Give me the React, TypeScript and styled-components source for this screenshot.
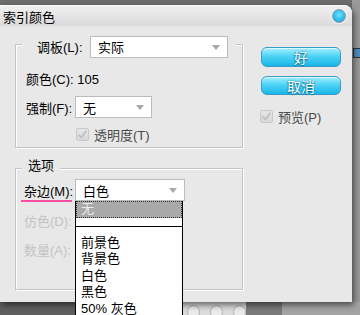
import React from 'react';
import styled, { createGlobalStyle } from 'styled-components';

const GlobalStyle = createGlobalStyle`
  html, body { margin: 0; padding: 0; }
  body {
    background: #6d6d6d;
    font-family: "Liberation Sans", "Noto Sans CJK SC", sans-serif;
    font-size: 13px;
    color: #000;
  }
`;

const Screen = styled.div`
  position: relative;
  width: 360px;
  height: 315px;
  overflow: hidden;
  background: linear-gradient(to right, #6d6d6d 352px, #9a9a9a 352px);
  display: flex;
  flex-direction: column;
`;

const Dialog = styled.div`
  position: relative;
  z-index: 1;
  margin-top: 5px;
  width: 352px;
  height: 297px;
  flex-shrink: 0;
  background: #e8e8e8;
  border-radius: 0 8px 0 0;
  box-shadow: 2px 3px 6px rgba(0, 0, 0, 0.55);
  display: flex;
  flex-direction: column;
`;

const TitleBar = styled.div`
  height: 21px;
  flex-shrink: 0;
  display: flex;
  align-items: center;
  justify-content: space-between;
  padding: 0 6px 0 3px;
  border-radius: 0 8px 0 0;
  background: linear-gradient(#f0f0f0, #dadada);
  border-top: 1px solid #fafafa;
  box-sizing: border-box;
  font-size: 13px;
`;

const CloseDot = styled.div`
  width: 12px;
  height: 12px;
  border-radius: 50%;
  background: radial-gradient(circle at 50% 40%, #6fe3ff, #1fb3e8 70%);
  border: 1px solid #8b9aa3;
  box-shadow: 0 0 0 1px #f4f4f4;
`;

const Body = styled.div`
  flex: 1;
  display: flex;
`;

const LeftCol = styled.div`
  margin-left: 15px;
  padding-top: 18px;
  width: 228px;
  display: flex;
  flex-direction: column;
  gap: 20px;
`;

const GroupBox = styled.div<{ $h: number; $pad: number }>`
  box-sizing: border-box;
  height: ${p => p.$h}px;
  border: 1px solid #c4c4c4;
  box-shadow: inset 1px 1px 0 #fff, 1px 1px 0 #fff;
  padding-left: ${p => p.$pad}px;
  display: flex;
  flex-direction: column;
  align-items: flex-start;
`;

const Header = styled.div`
  align-self: stretch;
  margin: -10px 6px 0 -4px;
  height: 23px;
  padding: 0 8px 0 15px;
  background: #e8e8e8;
  display: flex;
  align-items: center;
  justify-content: space-between;
`;

const Legend = styled.div`
  margin: -11px 0 0 -2px;
  padding: 0 6px;
  height: 16px;
  line-height: 16px;
  background: #e8e8e8;
`;

const Row = styled.div<{ $mt: number }>`
  margin-top: ${p => p.$mt}px;
  display: flex;
  align-items: center;
  height: 22px;
`;

const TextLine = styled.div<{ $mt: number; $muted?: boolean }>`
  margin-top: ${p => p.$mt}px;
  line-height: 16px;
  height: 16px;
  color: ${p => (p.$muted ? '#c3c3c3' : '#000')};
`;

const Label = styled.span<{ $w: number; $mark?: boolean }>`
  position: relative;
  width: ${p => p.$w}px;
  flex-shrink: 0;
  &::after {
    content: '';
    display: ${p => (p.$mark ? 'block' : 'none')};
    position: absolute;
    left: -3px;
    top: 19px;
    width: 51px;
    height: 2px;
    background: #ff4fa3;
  }
`;

const SelectBox = styled.div<{ $w: number }>`
  position: relative;
  box-sizing: border-box;
  width: ${p => p.$w}px;
  height: 22px;
  background: #fff;
  border: 1px solid #bcbcbc;
  display: flex;
  align-items: center;
  padding-left: 7px;
  &::after {
    content: '';
    position: absolute;
    right: 7px;
    top: 8px;
    border-left: 4px solid transparent;
    border-right: 4px solid transparent;
    border-top: 5px solid #a8a8a8;
  }
`;

const Menu = styled.div`
  position: absolute;
  z-index: 2;
  top: 21px;
  left: -1px;
  width: 108px;
  height: 130px;
  box-sizing: border-box;
  background: #fff;
  border-left: 1px solid #000;
  border-right: 1px solid #000;
`;

const MenuItem = styled.div<{ $active?: boolean }>`
  height: 16.5px;
  line-height: 16.5px;
  padding-left: 5px;
  box-sizing: border-box;
  background: ${p => (p.$active ? '#a9a9a9' : 'transparent')};
  color: ${p => (p.$active ? '#ececec' : '#000')};
  outline: ${p => (p.$active ? '1px dotted #333' : 'none')};
  outline-offset: -1px;
`;

const Separator = styled.div`
  height: 17px;
  display: flex;
  align-items: center;
  margin: 0 -1px;
  &::before {
    content: '';
    flex: 1;
    height: 1px;
    margin-top: 1px;
    background: #000;
  }
`;

const CheckRow = styled.div<{ $mt: number; $ml: number }>`
  margin-top: ${p => p.$mt}px;
  margin-left: ${p => p.$ml}px;
  display: flex;
  align-items: center;
  gap: 5px;
  height: 14px;
  color: #4a4a4a;
`;

const CheckBox = styled.div`
  width: 13px;
  height: 13px;
  box-sizing: border-box;
  border: 1px solid #c9c9c9;
  border-radius: 2px;
  background: linear-gradient(#e6e6e6, #d8d8d8);
  display: flex;
  align-items: center;
  justify-content: center;
`;

const RightCol = styled.div`
  margin-left: 18px;
  padding-top: 21px;
  display: flex;
  flex-direction: column;
  align-items: flex-start;
`;

const Button = styled.div<{ $mt: number; $h: number }>`
  margin-top: ${p => p.$mt}px;
  width: 80px;
  height: ${p => p.$h}px;
  box-sizing: border-box;
  border: 1px solid #3a9cc6;
  border-radius: 6px;
  background: linear-gradient(#a6f0ff 0%, #4fd3f6 45%, #19b6e6 100%);
  box-shadow: inset 0 1px 0 rgba(255, 255, 255, 0.6);
  display: flex;
  align-items: center;
  justify-content: center;
  color: #fff;
  font-size: 14px;
  text-shadow: 0 0 2px #0a6f93, 0 1px 1px #0a6f93;
`;

const BottomStrip = styled.div`
  flex: 1;
  display: flex;
`;

const Segment = styled.div<{ $w: number; $bg: string }>`
  width: ${p => p.$w}px;
  flex-shrink: 0;
  background: ${p => p.$bg};
  display: flex;
  align-items: flex-start;
  gap: 10px;
  padding-left: 4px;
  box-sizing: border-box;
`;

const Ring = styled.div`
  width: 12px;
  height: 12px;
  margin-top: 3px;
  border-radius: 50%;
  border: 1px solid #b5b5b5;
  background: #ececec;
`;

const SideIcon = styled.div`
  position: absolute;
  left: 353px;
  top: 48px;
  width: 7px;
  height: 8px;
  border: 1px solid #333;
  border-right: none;
  background: #4f8fc4;
`;

function Check() {
  return (
    <svg width="11" height="10" viewBox="0 0 11 10">
      <path d="M1.5 5.5 L4.5 8.5 L9.5 1.5" fill="none" stroke="#bdbdbd" strokeWidth="1.6" />
    </svg>
  );
}

const matteOptions = ['前景色', '背景色', '白色', '黑色', '50% 灰色'];

export default function App() {
  return (
    <>
      <GlobalStyle />
      <Screen>
        <Dialog>
          <TitleBar>
            <span>索引颜色</span>
            <CloseDot />
          </TitleBar>
          <Body>
            <LeftCol>
              <GroupBox $h={104} $pad={10}>
                <Header>
                  <span>调板(L):</span>
                  <SelectBox $w={138}>实际</SelectBox>
                </Header>
                <TextLine $mt={14}>颜色(C): 105</TextLine>
                <Row $mt={8}>
                  <Label $w={49}>强制(F):</Label>
                  <SelectBox $w={77}>无</SelectBox>
                </Row>
                <CheckRow $mt={9} $ml={50}>
                  <CheckBox><Check /></CheckBox>
                  <span>透明度(T)</span>
                </CheckRow>
              </GroupBox>
              <GroupBox $h={122} $pad={8}>
                <Legend>选项</Legend>
                <Row $mt={5}>
                  <Label $w={51} $mark>杂边(M):</Label>
                  <SelectBox $w={110}>
                    白色
                    <Menu>
                      <MenuItem $active>无</MenuItem>
                      <Separator />
                      {matteOptions.map(o => (
                        <MenuItem key={o}>{o}</MenuItem>
                      ))}
                    </Menu>
                  </SelectBox>
                </Row>
                <TextLine $mt={13} $muted>仿色(D):</TextLine>
                <TextLine $mt={13} $muted>数量(A):</TextLine>
              </GroupBox>
            </LeftCol>
            <RightCol>
              <Button $mt={0} $h={20}>好</Button>
              <Button $mt={9} $h={19}>取消</Button>
              <CheckRow $mt={14} $ml={-1}>
                <CheckBox><Check /></CheckBox>
                <span>预览(P)</span>
              </CheckRow>
            </RightCol>
          </Body>
        </Dialog>
        <BottomStrip>
          <Segment $w={183} $bg="#5f5f5f" />
          <Segment $w={63} $bg="#dcdcdc">
            <Ring />
            <Ring />
            <Ring />
          </Segment>
          <Segment $w={36} $bg="#7a7a7a" />
          <Segment $w={78} $bg="#a4a4a4" />
        </BottomStrip>
        <SideIcon />
      </Screen>
    </>
  );
}
